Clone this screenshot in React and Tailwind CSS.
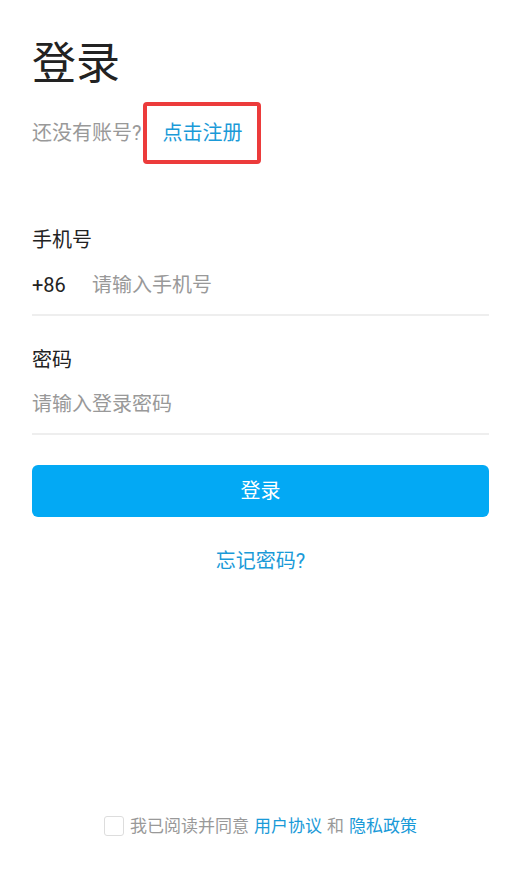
import React, { useState } from 'react';

const font = { fontFamily: 'Roboto, "Noto Sans CJK SC", sans-serif' };

const App = () => {
  const [phone, setPhone] = useState('');
  const [password, setPassword] = useState('');
  const [agreed, setAgreed] = useState(false);

  return (
    <div className="h-screen bg-white flex flex-col pl-8 pr-[30px]" style={font}>
      {/* Title */}
      <h1 className="mt-[42px] text-[44px] leading-[44px] text-[#222]">登录</h1>

      {/* Register hint */}
      <div className="mt-[16px] flex items-center text-[20px] leading-[20px]">
        <span className="text-[#999]">还没有账号?</span>
        <a className="ml-[2px] h-[62px] flex items-center px-[15px] border-4 border-[#ec3b3b] rounded-[4px] text-[#1a9ad8]">
          点击注册
        </a>
      </div>

      {/* Phone */}
      <label className="mt-[66px] text-[20px] leading-[20px] text-[#222]">手机号</label>
      <div className="mt-[10px] pt-[15px] pb-[19px] flex items-center border-b-2 border-[#eee] text-[20px] leading-[20px]">
        <span className="w-[60px] h-[20px] text-[#222]">+86</span>
        <input
          value={phone}
          onChange={(e) => setPhone(e.target.value)}
          placeholder="请输入手机号"
          className="flex-1 h-[20px] outline-none bg-transparent text-[#222] placeholder:text-[#999] leading-[20px]"
        />
      </div>

      {/* Password */}
      <label className="mt-[34px] text-[20px] leading-[20px] text-[#222]">密码</label>
      <div className="pt-[24px] pb-[19px] flex items-center border-b-2 border-[#eee] text-[20px] leading-[20px]">
        <input
          type="password"
          value={password}
          onChange={(e) => setPassword(e.target.value)}
          placeholder="请输入登录密码"
          className="flex-1 h-[20px] outline-none bg-transparent text-[#222] placeholder:text-[#999] leading-[20px]"
        />
      </div>

      <button className="mt-[30px] h-[52px] rounded-[6px] bg-[#03a9f4] text-white text-[20px]">
        登录
      </button>

      <a className="mt-[34px] self-center text-[20px] leading-[20px] text-[#1a9ad8]">忘记密码?</a>

      {/* Agreement */}
      <div className="mt-auto mb-[39px] flex items-center justify-center text-[17px] leading-[20px]">
        <button
          onClick={() => setAgreed(!agreed)}
          className={`w-[20px] h-[20px] rounded-[3px] border border-[#ddd] ${agreed ? 'bg-[#03a9f4]' : 'bg-white'}`}
        />
        <span className="ml-[6px] text-[#999]">我已阅读并同意</span>
        <a className="ml-[5px] text-[#1a9ad8]">用户协议</a>
        <span className="ml-[5px] text-[#999]">和</span>
        <a className="ml-[5px] text-[#1a9ad8]">隐私政策</a>
      </div>
    </div>
  );
};

export default App;
